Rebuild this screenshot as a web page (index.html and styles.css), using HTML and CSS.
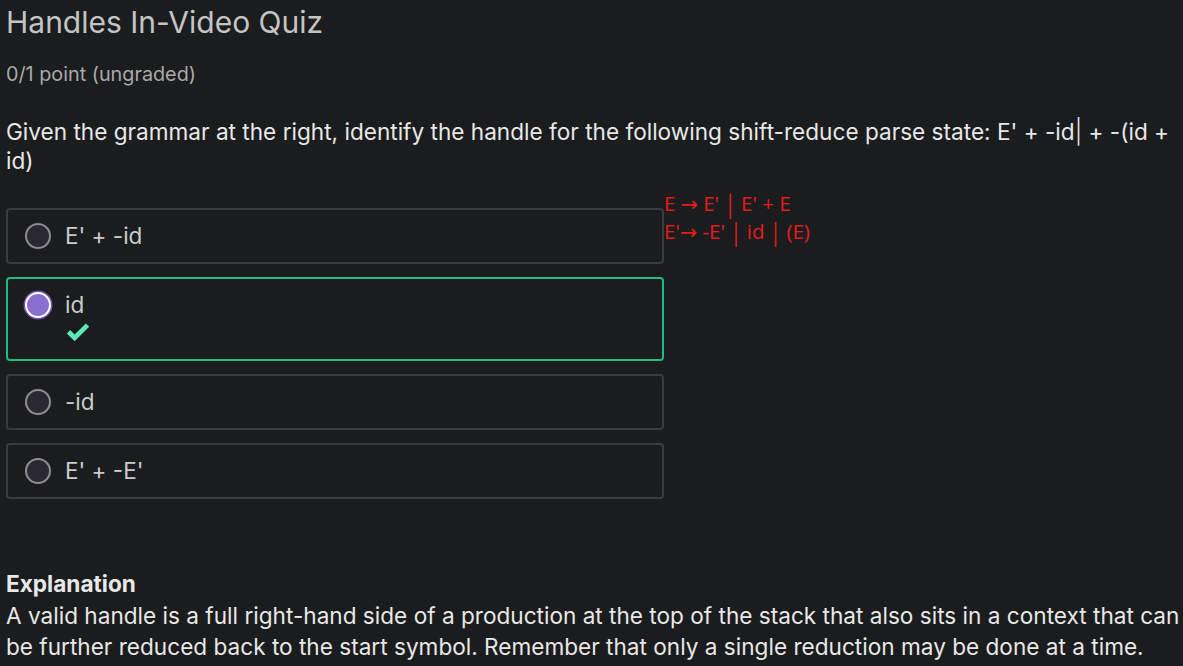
FILE: index.html
```html
<!DOCTYPE html>
<html lang="en">
<head>
<meta charset="utf-8">
<title>Handles In-Video Quiz</title>
<link rel="stylesheet" href="styles.css">
</head>
<body>
<main class="quiz">
  <h1 class="quiz-title">Handles In-Video Quiz</h1>
  <p class="quiz-points">0/1 point (ungraded)</p>
  <p class="quiz-question">Given the grammar at the right, identify the handle for the following shift-reduce parse state: E' + -id<span class="bar">|</span> + -(id + id)</p>

  <div class="quiz-body">
    <div class="options">
      <label class="option">
        <span class="radio"></span>
        <span class="option-text">E' + -id</span>
      </label>
      <label class="option option-correct">
        <span class="radio radio-checked"></span>
        <span class="option-content">
          <span class="option-text">id</span>
          <svg class="check" width="24" height="19" viewBox="0 0 24 19" aria-hidden="true">
            <path d="M0.8 10.4 L4.2 7 L8.6 11.4 L19.8 0.4 L23.2 3.8 L8.6 18.2 Z" fill="#5fe8b3"/>
          </svg>
        </span>
      </label>
      <label class="option">
        <span class="radio"></span>
        <span class="option-text">-id</span>
      </label>
      <label class="option">
        <span class="radio"></span>
        <span class="option-text">E' + -E'</span>
      </label>
    </div>
    <div class="grammar">
      <div>E → E' <span class="gbar">|</span> E' + E</div>
      <div>E'→ -E' <span class="gbar">|</span> id <span class="gbar">|</span> (E)</div>
    </div>
  </div>

  <section class="explanation">
    <h2 class="explanation-title">Explanation</h2>
    <p class="explanation-text">A valid handle is a full right-hand side of a production at the top of the stack that also sits in a context that can be further reduced back to the start symbol. Remember that only a single reduction may be done at a time.</p>
  </section>
</main>
</body>
</html>
```

FILE: styles.css
```css
html, body {
  margin: 0;
  padding: 0;
  background: #1b1c1e;
}

body {
  font-family: Inter, "Noto Sans", "Liberation Sans", sans-serif;
  color: #e6e6e6;
}

.quiz {
  padding: 4px 0 0 6px;
}

.quiz-title {
  margin: 0;
  font-size: 30px;
  line-height: 36px;
  font-weight: 400;
  color: #c4c4c4;
}

.quiz-points {
  margin: 19px 0 0 0;
  font-size: 19.8px;
  line-height: 30px;
  color: #a9a9a9;
}

.quiz-question {
  margin: 27.5px 0 0 0;
  font-size: 22.6px;
  line-height: 29px;
  color: #e8e8e8;
  max-width: 1174px;
}

.bar {
  font-size: 24px;
  line-height: 0;
  font-weight: 300;
  color: #e8e8e8;
}

.quiz-body {
  display: flex;
  align-items: flex-start;
  margin-top: 14.5px;
}

.options {
  width: 658px;
  flex: none;
  display: flex;
  flex-direction: column;
  gap: 13px;
  margin-top: 19px;
}

.option {
  display: flex;
  align-items: flex-start;
  gap: 14px;
  padding: 11px 17px;
  border: 2px solid #3b3c3f;
  border-radius: 4px;
}

.option-correct {
  border-color: #1ebd7d;
}

.radio {
  flex: none;
  width: 26px;
  height: 26px;
  margin-top: 2px;
  box-sizing: border-box;
  border-radius: 50%;
  border: 2px solid #8e8d94;
  background: #2a2932;
}

.radio-checked {
  border: 2px solid #ffffff;
  background: #8b6fce;
  box-shadow: 0 0 0 1.5px #6f52b6;
}

.option-text {
  font-size: 22.5px;
  line-height: 30px;
  color: #cbcbcb;
}

.option-content {
  display: flex;
  flex-direction: column;
  align-items: flex-start;
}

.check {
  display: block;
  margin: 3px 0 6px 1px;
}

.grammar {
  margin-left: 0;
  font-family: "Open Sans", "DejaVu Sans", sans-serif;
  font-size: 20.5px;
  line-height: 28px;
  color: #e81b1b;
}

.gbar {
  display: inline-block;
  transform: scaleY(1.2);
}

.explanation {
  margin-top: 69px;
}

.explanation-title {
  margin: 0;
  font-size: 22.6px;
  line-height: 31.5px;
  font-weight: 700;
  color: #e8e8e8;
}

.explanation-text {
  margin: 0;
  font-size: 22.6px;
  line-height: 31.5px;
  color: #e8e8e8;
}
```
